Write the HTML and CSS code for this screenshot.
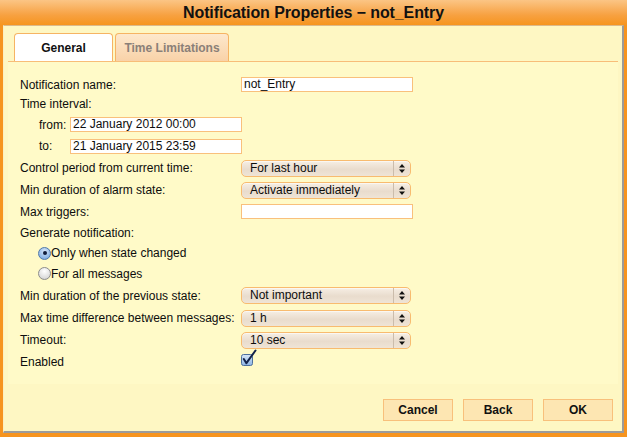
FILE: index.html
```html
<!DOCTYPE html>
<html>
<head>
<meta charset="utf-8">
<link rel="stylesheet" href="styles.css">
</head>
<body>
<div class="window">
  <div class="titlebar">Notification Properties − not_Entry</div>
  <div class="panel">
    <div class="tabs">
      <div class="tab tab-general active">General</div>
      <div class="tab tab-time">Time Limitations</div>
    </div>
    <div class="form">
      <div class="row h19"><span class="label">Notification name:</span><div class="input wide">not_Entry</div></div>
      <div class="row h20"><span class="label">Time interval:</span></div>
      <div class="row h21 sub"><span class="sublabel">from:</span><div class="input date">22 January 2012 00:00</div></div>
      <div class="row h22 sub"><span class="sublabel">to:</span><div class="input date">21 January 2015 23:59</div></div>
      <div class="row h22"><span class="label">Control period from current time:</span><div class="select"><span class="sel-text">For last hour</span><span class="sel-arrows"><svg width="8" height="11" viewBox="0 0 8 11"><path d="M4 1 L7 4.5 L1 4.5 Z M1 6.5 L7 6.5 L4 10 Z" fill="#111"/></svg></span></div></div>
      <div class="row h22"><span class="label">Min duration of alarm state:</span><div class="select"><span class="sel-text">Activate immediately</span><span class="sel-arrows"><svg width="8" height="11" viewBox="0 0 8 11"><path d="M4 1 L7 4.5 L1 4.5 Z M1 6.5 L7 6.5 L4 10 Z" fill="#111"/></svg></span></div></div>
      <div class="row h21"><span class="label">Max triggers:</span><div class="input wide"></div></div>
      <div class="row h21"><span class="label">Generate notification:</span></div>
      <div class="row h20 opt"><span class="radio checked"><span class="dot"></span></span><span>Only when state changed</span></div>
      <div class="row h21 opt"><span class="radio"></span><span>For all messages</span></div>
      <div class="row h23"><span class="label">Min duration of the previous state:</span><div class="select"><span class="sel-text">Not important</span><span class="sel-arrows"><svg width="8" height="11" viewBox="0 0 8 11"><path d="M4 1 L7 4.5 L1 4.5 Z M1 6.5 L7 6.5 L4 10 Z" fill="#111"/></svg></span></div></div>
      <div class="row h22"><span class="label">Max time difference between messages:</span><div class="select"><span class="sel-text">1 h</span><span class="sel-arrows"><svg width="8" height="11" viewBox="0 0 8 11"><path d="M4 1 L7 4.5 L1 4.5 Z M1 6.5 L7 6.5 L4 10 Z" fill="#111"/></svg></span></div></div>
      <div class="row h22"><span class="label">Timeout:</span><div class="select"><span class="sel-text">10 sec</span><span class="sel-arrows"><svg width="8" height="11" viewBox="0 0 8 11"><path d="M4 1 L7 4.5 L1 4.5 Z M1 6.5 L7 6.5 L4 10 Z" fill="#111"/></svg></span></div></div>
      <div class="row h21"><span class="label">Enabled</span><span class="checkbox"><svg width="17" height="18" viewBox="0 0 17 18"><defs><linearGradient id="cb" x1="0" y1="0" x2="0" y2="1"><stop offset="0" stop-color="#d9e8f8"/><stop offset="1" stop-color="#8db4e4"/></linearGradient></defs><rect x="0.5" y="5.5" width="11" height="11" rx="2" fill="url(#cb)" stroke="#4d6f9c"/><path d="M2.8 10 L5.4 14.2 L14.5 1.5" fill="none" stroke="#13224a" stroke-width="2" stroke-linecap="round" stroke-linejoin="round"/></svg></span></div>
    </div>
    <div class="buttons">
      <div class="btn">Cancel</div>
      <div class="btn">Back</div>
      <div class="btn">OK</div>
    </div>
  </div>
</div>
</body>
</html>
```

FILE: styles.css
```css
* { box-sizing: border-box; }
html, body { margin: 0; padding: 0; }
body {
  width: 627px;
  height: 437px;
  background: #f6941f;
  font-family: "Liberation Sans", Arial, sans-serif;
  font-size: 12px;
  color: #0d0d0d;
  overflow: hidden;
}
.window {
  width: 627px;
  height: 437px;
  display: flex;
  flex-direction: column;
  background: #f6941f;
}
.titlebar {
  height: 25px;
  flex: 0 0 25px;
  background: linear-gradient(#fbc585, #f7a141 60%, #f6951f);
  text-align: center;
  font-weight: bold;
  font-size: 16px;
  line-height: 25px;
  letter-spacing: -0.1px;
  color: #111;
}
.panel {
  margin: 0 3px 4px 3px;
  flex: 1;
  background: #fef7c3;
  border-left: 1px solid #fdeec0;
  border-top: 1px solid #dcb98a;
  border-right: 2px solid #9b9b9b;
  border-bottom: 2px solid #9b9b9b;
  display: flex;
  flex-direction: column;
}
.tabs {
  margin: 7px 4px 0 4px;
  padding-left: 6px;
  display: flex;
  gap: 2px;
  align-items: flex-end;
  border-bottom: 1px solid #f8bd78;
  height: 29px;
}
.tab {
  height: 28px;
  border: 1px solid #f6b463;
  border-bottom: none;
  border-radius: 4px 4px 0 0;
  font-weight: bold;
  font-size: 12px;
  display: flex;
  align-items: center;
  justify-content: center;
}
.tab-general {
  width: 99px;
  background: #ffffff;
  color: #111;
}
.tab-time {
  width: 114px;
  background: linear-gradient(#fde8cc, #f9d2a8);
  color: #8a8078;
}
.form {
  margin: 0 4px;
  background: #fffac8;
  padding: 13px 0 12px 12px;
  display: flex;
  flex-direction: column;
}
.row {
  display: flex;
  align-items: center;
}
.h19 { height: 19px; }
.h20 { height: 20px; }
.h21 { height: 21px; }
.h22 { height: 22px; }
.h23 { height: 23px; }
.label {
  flex: 0 0 221px;
  white-space: nowrap;
}
.sub { padding-left: 19px; }
.sublabel { flex: 0 0 31px; }
.input {
  height: 15px;
  background: #fff;
  border: 1px solid #f9c07c;
  padding-left: 2px;
  line-height: 13px;
  font-size: 12px;
  white-space: nowrap;
}
.input.wide { width: 172px; }
.input.date { width: 172px; }
.select {
  width: 170px;
  height: 17px;
  border: 1px solid #f8bb6f;
  border-radius: 5px;
  background: linear-gradient(#f6eee4, #e9dccd 55%, #efe4d6);
  box-shadow: inset 0 1px 1px rgba(255,255,255,0.6);
  display: flex;
  align-items: center;
}
.sel-text {
  flex: 1;
  padding-left: 8px;
  line-height: 15px;
  white-space: nowrap;
}
.sel-arrows {
  width: 17px;
  height: 15px;
  border-left: 1px solid #cbbcab;
  display: flex;
  align-items: center;
  justify-content: center;
}
.sel-arrows svg { display: block; }
.opt { padding-left: 18px; }
.radio {
  width: 13px;
  height: 13px;
  border-radius: 50%;
  border: 1px solid #8c8c8c;
  background: radial-gradient(circle at 50% 30%, #ffffff, #dcdcdc 70%, #c4c4c4);
  display: inline-flex;
  align-items: center;
  justify-content: center;
  flex: 0 0 13px;
}
.radio.checked {
  border-color: #4f78aa;
  background: radial-gradient(circle at 50% 30%, #d6e6f8, #8db6e6 70%, #6a99d6);
}
.radio .dot {
  width: 4px;
  height: 4px;
  border-radius: 50%;
  background: #101c3a;
}
.checkbox {
  display: block;
  height: 18px;
  margin-top: -7px;
}
.checkbox svg { display: block; }
.buttons {
  display: flex;
  justify-content: flex-end;
  gap: 10px;
  padding-right: 9px;
  margin-top: 15px;
}
.btn {
  width: 70px;
  height: 22px;
  background: #fde6b2;
  border: 1px solid #f8c07b;
  font-weight: bold;
  font-size: 12px;
  display: flex;
  align-items: center;
  justify-content: center;
  color: #111;
}
```
